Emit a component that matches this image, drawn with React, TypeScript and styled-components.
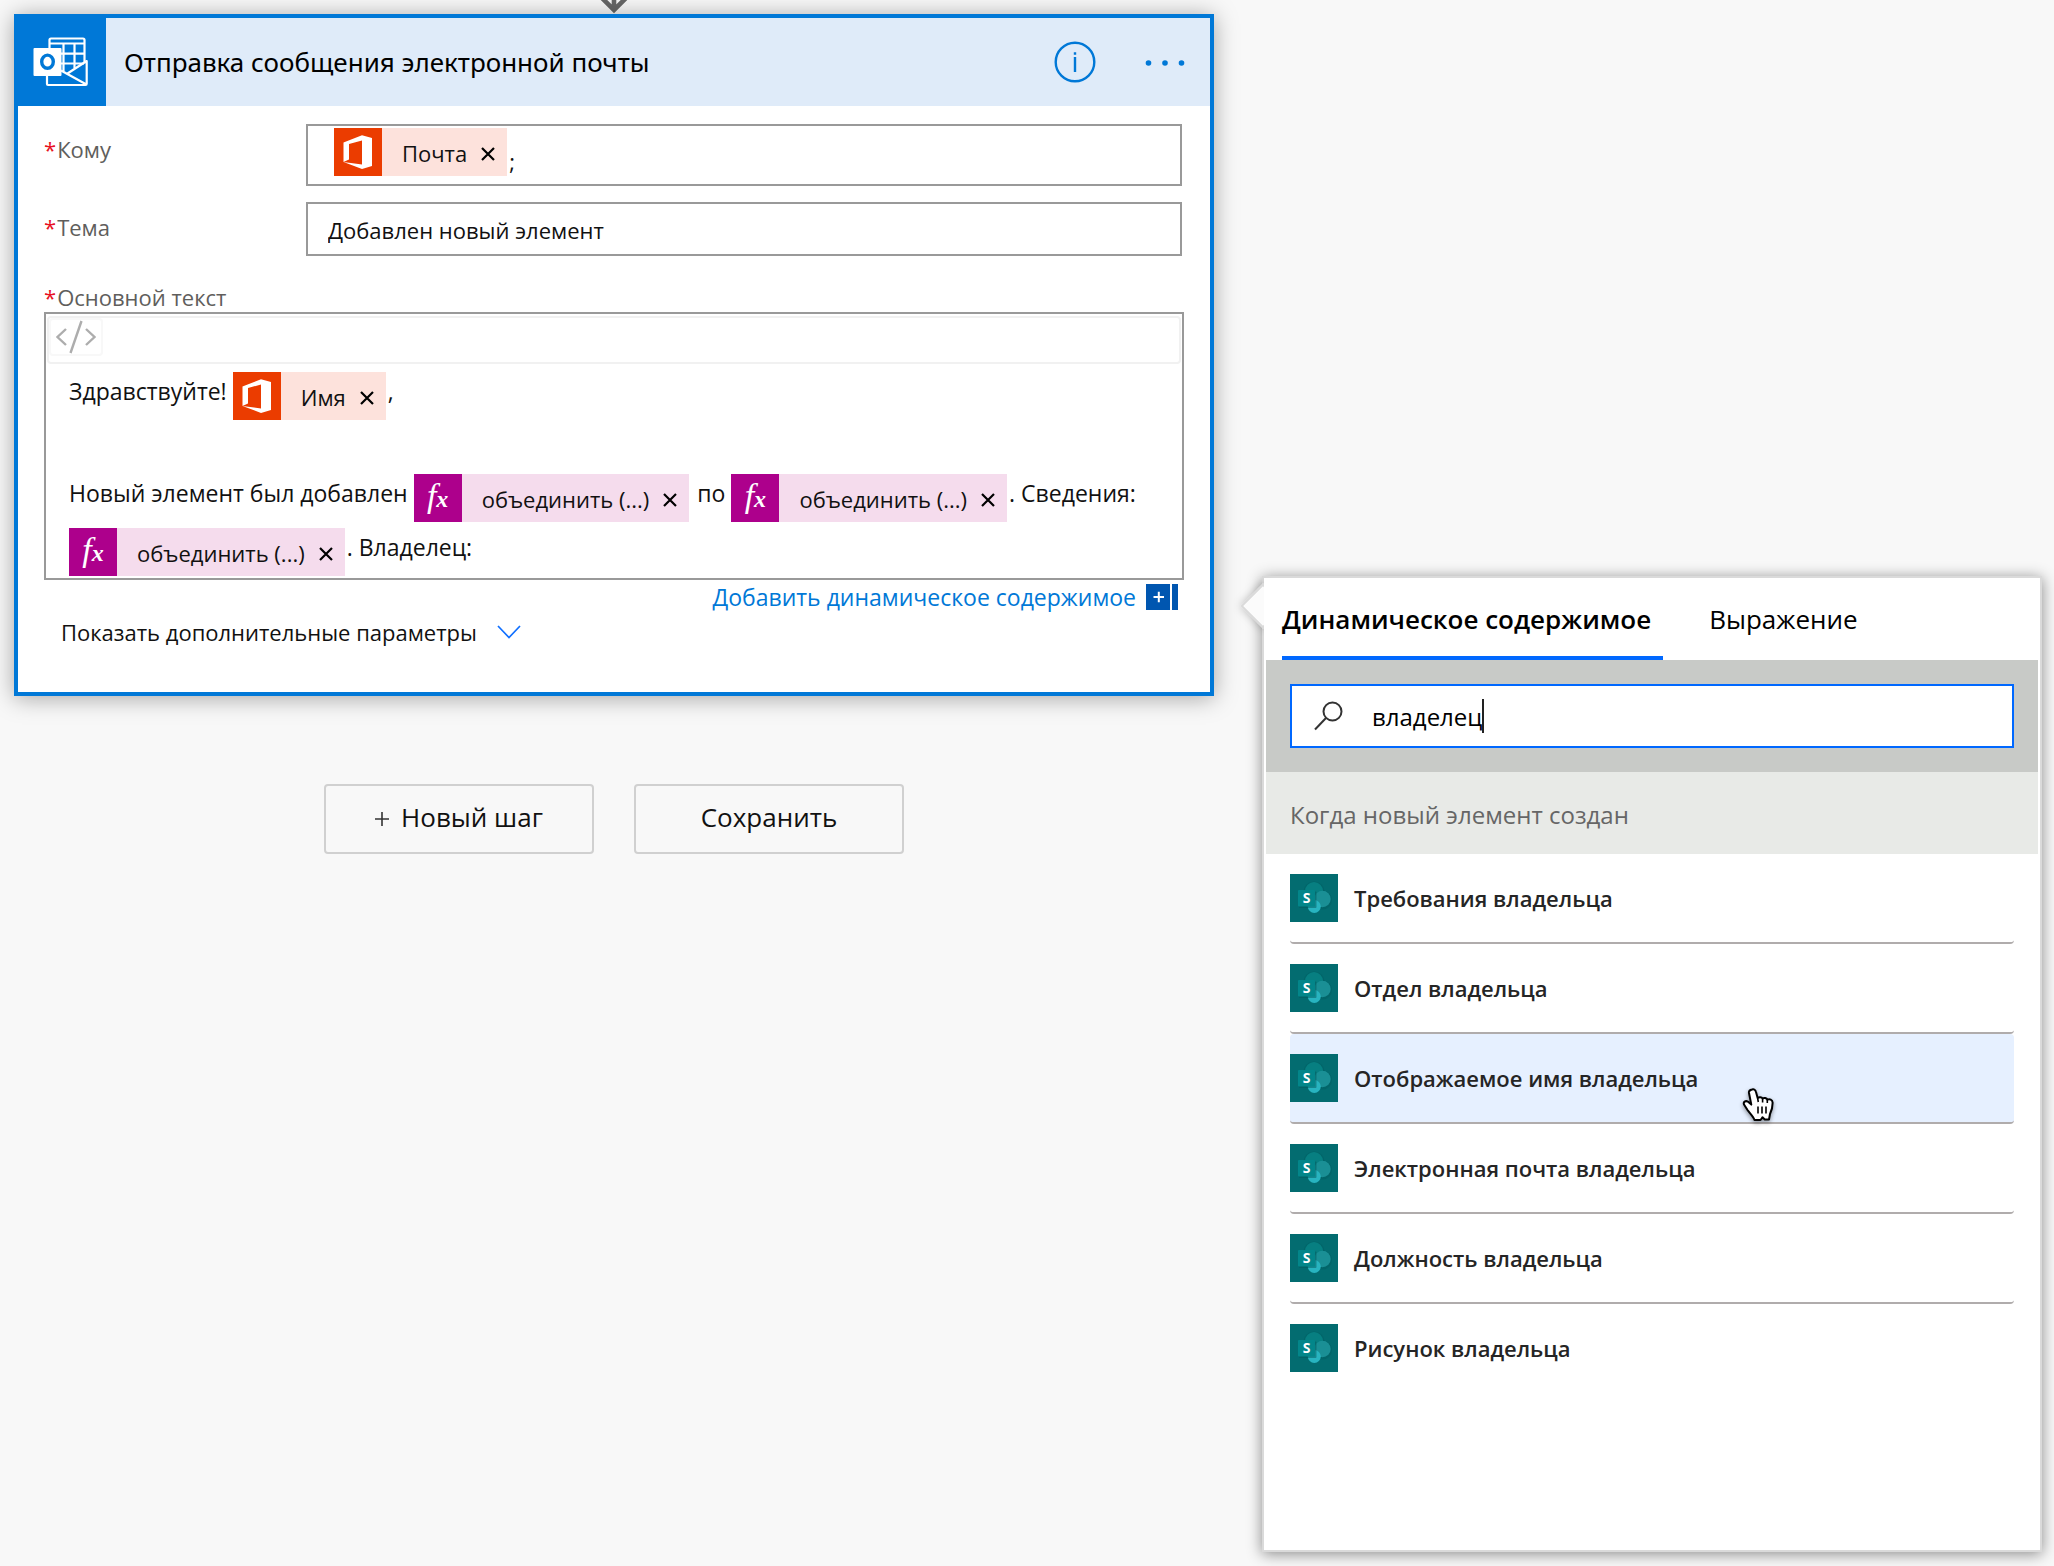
import React, { useState } from "react";
import styled, { createGlobalStyle, css } from "styled-components";

const sans = `"Open Sans", "Noto Sans", "Liberation Sans", sans-serif`;
const titleSans = `"Noto Sans", "Open Sans", "Liberation Sans", sans-serif`;

const GlobalStyle = createGlobalStyle`
  *, *::before, *::after { box-sizing: border-box; }
  body {
    margin: 0;
    background: #f8f8f8;
    color: #111;
    font-family: ${sans};
    font-size: 22px;
  }
  button, input { font: inherit; color: inherit; }
`;

const buttonReset = css`
  margin: 0;
  padding: 0;
  border: 0;
  background: none;
  cursor: pointer;
`;

const Page = styled.main`
  display: grid;
  grid-template-columns: minmax(0, 1200fr) minmax(0, 780fr);
  column-gap: 48px;
  min-height: 100vh;
  padding: 0 12px 14px 14px;
`;

const Flow = styled.div`
  display: flex;
  flex-direction: column;
`;

const ArrowIcon = styled.svg`
  align-self: center;
  width: 30px;
  height: 14px;
`;

const Card = styled.section`
  border: 4px solid #0078d7;
  background: #fff;
  box-shadow: 0 2px 22px rgba(0, 0, 0, 0.34);
`;

const CardHeader = styled.header`
  display: flex;
  align-items: center;
  height: 88px;
  padding-right: 22px;
  background: #dfebf9;
`;

const OutlookTile = styled.svg`
  flex: none;
  width: 88px;
  height: 88px;
  background: #0078d7;
`;

const CardTitle = styled.h1`
  flex: 1;
  margin: 0;
  padding-left: 18px;
  font-family: ${titleSans};
  font-size: 26px;
  font-weight: 400;
  color: #000;
`;

const IconButton = styled.button`
  ${buttonReset}
  display: flex;
  align-items: center;
  justify-content: center;
  height: 42px;
  margin-left: 46px;
`;

const Form = styled.div`
  padding: 18px 26px 44px;
`;

const FieldRow = styled.div`
  display: grid;
  grid-template-columns: 262px minmax(0, 1fr);
  margin: 0 2px 16px 0;
`;

const FieldLabel = styled.label`
  display: flex;
  gap: 1px;
  line-height: 50px;
  color: #605e5c;
`;

const BodyLabel = styled(FieldLabel)`
  margin-top: 24px;
  padding: 4px 0 2px;
  line-height: 26px;
`;

const Star = styled.span`
  color: #e81123;
`;

const Recipients = styled.div`
  height: 62px;
  padding: 2px 26px;
  border: 2px solid #999;
  outline: 0;
`;

const TextInput = styled.input`
  width: 100%;
  height: 54px;
  padding: 2px 20px 0;
  border: 2px solid #999;
  border-radius: 0;
  background: #fff;
  outline: 0;
`;

const Chip = styled.span<{ $tint: string; $shift: number }>`
  display: inline-flex;
  align-items: center;
  height: 48px;
  margin-right: 2px;
  padding-right: 12px;
  vertical-align: ${(p) => p.$shift}px;
  background: ${(p) => p.$tint};
  font-size: 22px;
  white-space: nowrap;
`;

const ChipIcon = styled.svg`
  flex: none;
  width: 48px;
  height: 48px;
`;

const FxTile = styled.span`
  display: inline-flex;
  align-items: baseline;
  justify-content: center;
  width: 48px;
  height: 48px;
  background: #ad008c;
  color: #fff;
  font: italic 34px/44px "Liberation Serif", serif;
`;

const FxArgument = styled.b`
  font-size: 24px;
`;

const ChipText = styled.span`
  align-self: baseline;
  padding: 0 14px 0 20px;
  line-height: 50px;
`;

const ChipRemove = styled.button`
  ${buttonReset}
  display: flex;
  padding-top: 4px;
`;

const Editor = styled.div`
  border: 2px solid #999;
`;

const EditorToolbar = styled.div`
  height: 48px;
  margin: 2px 1px 2px;
  border: 2px solid #f1f1f1;
  border-radius: 4px;
`;

const CodeButton = styled.button`
  ${buttonReset}
  display: flex;
  align-items: center;
  justify-content: center;
  width: 54px;
  height: 38px;
  border: 2px solid #f8f8f8;
  border-radius: 4px;
`;

const EditorBody = styled.div`
  padding: 0 23px 2px;
  font-size: 23px;
  outline: 0;

  ${Chip} {
    margin-top: 6px;
  }
`;

const Line = styled.p`
  min-height: 48px;
  margin: 0;
`;

const DynamicRow = styled.div`
  display: flex;
  justify-content: flex-end;
  padding: 4px 6px 6px;
`;

const DynamicLink = styled.a`
  display: flex;
  align-items: center;
  gap: 10px;
  height: 26px;
  color: #0078d7;
  font-size: 23px;
  text-decoration: none;
`;

const MoreButton = styled.button`
  ${buttonReset}
  display: flex;
  align-items: center;
  gap: 20px;
  margin-left: 17px;
  line-height: 32px;
`;

const Actions = styled.div`
  display: flex;
  justify-content: center;
  gap: 40px;
  margin-top: 88px;
`;

const ActionButton = styled.button`
  ${buttonReset}
  display: flex;
  align-items: center;
  justify-content: center;
  gap: 12px;
  width: 270px;
  height: 70px;
  padding-bottom: 4px;
  border: 2px solid #d0d0d0;
  border-radius: 4px;
  font-size: 26px;

  svg {
    margin-top: 4px;
  }
`;

const Side = styled.div`
  display: flex;
  padding-top: 576px;
`;

const Panel = styled.aside`
  position: relative;
  display: flex;
  flex: 1;
  border: 2px solid #dadada;
  box-shadow: 0 2px 14px rgba(0, 0, 0, 0.45);
`;

const Beak = styled.span`
  position: absolute;
  top: 12px;
  left: -17px;
  width: 32px;
  height: 32px;
  border: 2px solid #dadada;
  background: #fbfbfb;
  box-shadow: 0 0 10px rgba(0, 0, 0, 0.25);
  transform: rotate(45deg);
`;

const PanelBody = styled.div`
  position: relative;
  flex: 1;
  padding: 0 2px;
  background: #fff;
`;

const Tabs = styled.div`
  display: flex;
  gap: 46px;
  padding: 0 16px;
`;

const Tab = styled.button<{ $active: boolean }>`
  ${buttonReset}
  height: 82px;
  padding: 4px 12px 0 0;
  border-bottom: 4px solid ${(p) => (p.$active ? "#0068ff" : "transparent")};
  color: #000;
  font-size: 26px;
  font-weight: ${(p) => (p.$active ? 600 : 400)};
`;

const SearchBar = styled.div`
  padding: 24px;
  background: #c8cac7;
`;

const SearchField = styled.label`
  display: flex;
  align-items: center;
  height: 64px;
  padding-left: 22px;
  border: 2px solid #0068ff;
  background: #fff;
  cursor: text;
`;

const SearchInput = styled.input`
  field-sizing: content;
  height: 40px;
  margin-left: 28px;
  padding: 0;
  border: 0;
  background: none;
  outline: 0;
  color: #000;
  font-size: 24px;
  caret-color: transparent;
`;

const Caret = styled.span`
  width: 2px;
  height: 34px;
  background: #222;
`;

const SectionTitle = styled.h2`
  margin: 0;
  padding: 4px 24px 0;
  background: #e8eae7;
  color: #666;
  font-size: 24px;
  font-weight: 400;
  line-height: 78px;
`;

const Results = styled.ul`
  margin: 0;
  padding: 0 24px;
  list-style: none;
`;

const ResultItem = styled.li`
  position: relative;
`;

const Result = styled.button<{ $hovered: boolean; $last: boolean }>`
  ${buttonReset}
  display: flex;
  align-items: center;
  gap: 16px;
  width: 100%;
  height: 90px;
  border-bottom: 2px solid ${(p) => (p.$last ? "transparent" : "#b0acac")};
  border-radius: 4px;
  background: ${(p) => (p.$hovered ? "#e6f0ff" : "none")};
  color: #252525;
  font-weight: 600;
  text-align: left;
`;

const Pointer = styled.svg`
  position: absolute;
  right: 238px;
  bottom: 0;
  width: 34px;
  height: 36px;
  overflow: visible;
  filter: drop-shadow(0 2px 2px rgba(0, 0, 0, 0.4));
  pointer-events: none;
`;

function OutlookIcon() {
  return (
    <OutlookTile viewBox="18 18 88 88" aria-hidden="true">
      <g fill="none" stroke="#fff" strokeWidth="2.200" strokeLinejoin="round">
        <path d="M49.5 49V40q0-1.5 1.500-1.500H83q1.500 0 1.500 1.500V63M49.500 43.500H84M63.500 43.500V71M74.500 43.500V68M60 53.700H84M60 63.500H84" />
        <path d="M47 75V84q0 1 1 1H85.500q1.200 0 1.200-1.200V61L67.500 73.500M61 70.500 86.500 84.500" />
      </g>
      <path d="M33.500 49q0-1 1-1H60.500q1 0 1 1V75q0 1-1 1H34.500q-1 0-1-1z" fill="#fff" />
      <ellipse cx="47.500" cy="61.700" rx="5.800" ry="6.600" fill="none" stroke="#0078d7" strokeWidth="3.400" />
    </OutlookTile>
  );
}

function OfficeIcon() {
  return (
    <ChipIcon viewBox="0 0 48 48" aria-hidden="true">
      <rect width="48" height="48" fill="#eb3c00" />
      <path fill="#fff" d="M9.500 14.500 28 7.300 38 10V38L28 41 9.500 34 28 36.500V12.500L15 16V31.500L9.500 34Z" />
    </ChipIcon>
  );
}

function SharePointIcon() {
  return (
    <ChipIcon viewBox="0 0 48 48" aria-hidden="true">
      <rect width="48" height="48" fill="#036c70" />
      <circle cx="24" cy="18" r="10.500" fill="#02585c" opacity=".35" />
      <circle cx="32.500" cy="26" r="9.500" fill="#02585c" opacity=".35" />
      <circle cx="24" cy="17" r="9" fill="#077f81" />
      <circle cx="32.500" cy="25" r="8.200" fill="#1a8f95" />
      <circle cx="24.300" cy="32.500" r="6.500" fill="#28b4c0" />
      <rect x="9" y="17.500" width="17.500" height="16.500" rx="1" fill="#02585c" opacity=".5" />
      <rect x="8" y="16" width="17" height="16.500" rx="1" fill="#03868a" />
      <text x="16.500" y="29" textAnchor="middle" fill="#fff" fontFamily="Open Sans, sans-serif" fontWeight="700" fontSize="14">
        S
      </text>
    </ChipIcon>
  );
}

function FxIcon() {
  return (
    <FxTile aria-hidden="true">
      f<FxArgument>x</FxArgument>
    </FxTile>
  );
}

type TokenProps = { kind: "office" | "fx"; label: string; shift?: number };

function Token({ kind, label, shift = -6 }: TokenProps) {
  return (
    <Chip $tint={kind === "office" ? "#fde2dc" : "#f5dced"} $shift={shift} contentEditable={false}>
      {kind === "office" ? <OfficeIcon /> : <FxIcon />}
      <ChipText>{label}</ChipText>
      <ChipRemove type="button" aria-label={`Удалить: ${label}`}>
        <svg width="14" height="14" viewBox="0 0 14 14" aria-hidden="true">
          <path d="M1 1 13 13M13 1 1 13" stroke="#000" strokeWidth="2.200" />
        </svg>
      </ChipRemove>
    </Chip>
  );
}

function PointerIcon() {
  return (
    <Pointer viewBox="0 0 34 36" aria-hidden="true">
      <path
        d="M10 1.500C12 .8 13.600 2 14 4L15.700 10.200C17 8.700 19.700 9 20.600 10.600 22 9.400 24.600 9.900 25.300 11.700 27.500 10.600 30.500 11.500 30.600 14.500 30.700 19 30 22 28 26L27 31.500H22.800L20.500 29.300 18.500 32H12.500C11.500 28.500 8 25.500 5.500 22L2 16.500C1 14 3.500 12.300 5.800 13.600L9.300 16.600 7 5C6.700 3.200 8 1.900 10 1.500Z"
        fill="#fff"
        stroke="#000"
        strokeWidth="2"
        strokeLinejoin="round"
      />
      <path d="M15.700 10.500 16.300 14M20.600 11V14.500M25.300 12V15M16 18.500V25.500M20 18.500V25.500M24 18.500V25.500" fill="none" stroke="#000" strokeWidth="1.600" />
    </Pointer>
  );
}

const results = [
  "Требования владельца",
  "Отдел владельца",
  "Отображаемое имя владельца",
  "Электронная почта владельца",
  "Должность владельца",
  "Рисунок владельца",
];

function EmailCard() {
  const [subject, setSubject] = useState("Добавлен новый элемент");
  return (
    <Card>
      <CardHeader>
        <OutlookIcon />
        <CardTitle>Отправка сообщения электронной почты</CardTitle>
        <IconButton type="button" aria-label="Сведения">
          <svg width="42" height="42" viewBox="0 0 42 42" aria-hidden="true">
            <circle cx="21" cy="21" r="19.300" fill="none" stroke="#0078d7" strokeWidth="2.400" />
            <path d="M21 16V31M21 11.200V13.800" stroke="#0078d7" strokeWidth="2.400" />
          </svg>
        </IconButton>
        <IconButton type="button" aria-label="Меню">
          <svg width="46" height="8" viewBox="0 0 46 8" aria-hidden="true" fill="#0078d7">
            <circle cx="6.500" cy="5" r="2.800" />
            <circle cx="23" cy="5" r="2.800" />
            <circle cx="39.500" cy="5" r="2.800" />
          </svg>
        </IconButton>
      </CardHeader>
      <Form>
        <FieldRow>
          <FieldLabel as="span" id="to-label">
            <Star>*</Star>Кому
          </FieldLabel>
          <Recipients role="textbox" aria-labelledby="to-label" contentEditable suppressContentEditableWarning>
            <Token kind="office" label="Почта" shift={8} />
            ;
          </Recipients>
        </FieldRow>
        <FieldRow>
          <FieldLabel htmlFor="subject">
            <Star>*</Star>Тема
          </FieldLabel>
          <TextInput id="subject" value={subject} onChange={(e) => setSubject(e.target.value)} />
        </FieldRow>
        <BodyLabel as="span" id="body-label">
          <Star>*</Star>Основной текст
        </BodyLabel>
        <Editor>
          <EditorToolbar>
            <CodeButton type="button" aria-label="Код">
              <svg width="42" height="34" viewBox="0 0 42 34" fill="none" stroke="#adadad" strokeWidth="2.400" aria-hidden="true">
                <path d="M11 9 2.500 17 11 25M31 9 39.500 17 31 25M26.500 1 15.500 33" />
              </svg>
            </CodeButton>
          </EditorToolbar>
          <EditorBody role="textbox" aria-labelledby="body-label" aria-multiline="true" contentEditable suppressContentEditableWarning>
            <Line>
              Здравствуйте! <Token kind="office" label="Имя" />,
            </Line>
            <Line />
            <Line>
              Новый элемент был добавлен <Token kind="fx" label="объединить (...)" /> по{" "}
              <Token kind="fx" label="объединить (...)" />. Сведения: <Token kind="fx" label="объединить (...)" />. Владелец:
            </Line>
          </EditorBody>
        </Editor>
        <DynamicRow>
          <DynamicLink href="#dynamic-content">
            Добавить динамическое содержимое
            <svg width="32" height="26" viewBox="0 0 32 26" aria-hidden="true">
              <path d="M0 0H24V26H0zM26 0H32V26H26z" fill="#0056b0" />
              <path d="M7.500 13H18M12.800 7.800V18.200" stroke="#fff" strokeWidth="2" />
            </svg>
          </DynamicLink>
        </DynamicRow>
        <MoreButton type="button">
          Показать дополнительные параметры
          <svg width="24" height="14" viewBox="0 0 24 14" fill="none" stroke="#0f6fff" strokeWidth="1.700" aria-hidden="true">
            <path d="M1 1 12 12.500 23 1" />
          </svg>
        </MoreButton>
      </Form>
    </Card>
  );
}

function DynamicPanel() {
  const [query, setQuery] = useState("владелец");
  return (
    <Panel id="dynamic-content">
      <Beak />
      <PanelBody>
        <Tabs role="tablist">
          <Tab type="button" role="tab" aria-selected="true" $active>
            Динамическое содержимое
          </Tab>
          <Tab type="button" role="tab" aria-selected="false" $active={false}>
            Выражение
          </Tab>
        </Tabs>
        <SearchBar>
          <SearchField>
            <svg width="30" height="30" viewBox="0 0 30 30" fill="none" stroke="#333" strokeWidth="2" aria-hidden="true">
              <circle cx="18.500" cy="10.500" r="9" />
              <path d="M12 17 1 28.500" />
            </svg>
            <SearchInput aria-label="Поиск динамического содержимого" value={query} onChange={(e) => setQuery(e.target.value)} />
            <Caret />
          </SearchField>
        </SearchBar>
        <SectionTitle>Когда новый элемент создан</SectionTitle>
        <Results>
          {results.map((name, i) => (
            <ResultItem key={name}>
              <Result type="button" $hovered={i === 2} $last={i === results.length - 1}>
                <SharePointIcon />
                {name}
              </Result>
              {i === 2 && <PointerIcon />}
            </ResultItem>
          ))}
        </Results>
      </PanelBody>
    </Panel>
  );
}

export default function App() {
  return (
    <>
      <GlobalStyle />
      <Page>
        <Flow>
          <ArrowIcon viewBox="0 0 30 14" aria-hidden="true">
            <path d="M15 0V9M1-4 15 10 29-4" fill="none" stroke="#666" strokeWidth="4.600" />
          </ArrowIcon>
          <EmailCard />
          <Actions>
            <ActionButton type="button">
              <svg width="14" height="14" viewBox="0 0 14 14" aria-hidden="true">
                <path d="M0 7H14M7 0V14" stroke="#333" strokeWidth="1.600" />
              </svg>
              Новый шаг
            </ActionButton>
            <ActionButton type="button">Сохранить</ActionButton>
          </Actions>
        </Flow>
        <Side>
          <DynamicPanel />
        </Side>
      </Page>
    </>
  );
}
